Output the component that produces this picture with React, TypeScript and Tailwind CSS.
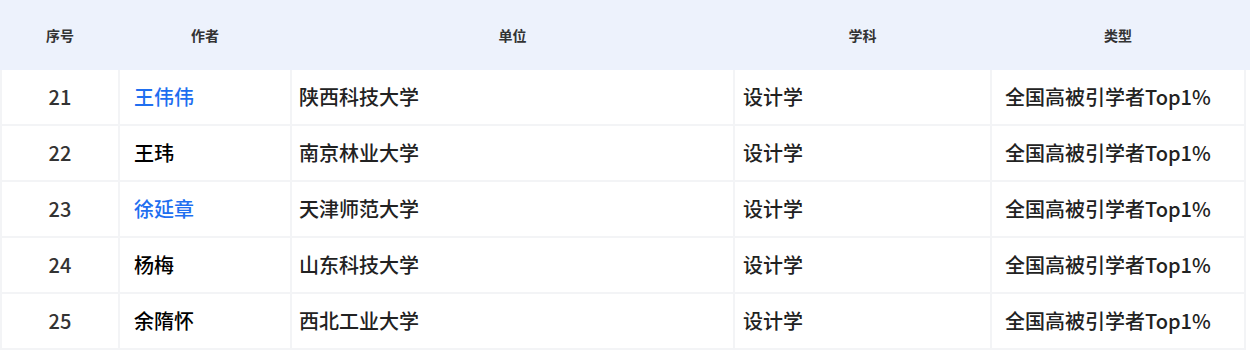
import React from 'react';

type Row = { no: number; author: string; linked: boolean; org: string; subject: string; kind: string };

const rows: Row[] = [
  { no: 21, author: '王伟伟', linked: true, org: '陕西科技大学', subject: '设计学', kind: '全国高被引学者Top1%' },
  { no: 22, author: '王玮', linked: false, org: '南京林业大学', subject: '设计学', kind: '全国高被引学者Top1%' },
  { no: 23, author: '徐延章', linked: true, org: '天津师范大学', subject: '设计学', kind: '全国高被引学者Top1%' },
  { no: 24, author: '杨梅', linked: false, org: '山东科技大学', subject: '设计学', kind: '全国高被引学者Top1%' },
  { no: 25, author: '余隋怀', linked: false, org: '西北工业大学', subject: '设计学', kind: '全国高被引学者Top1%' },
];

const cols = 'grid grid-cols-[116px_170px_441px_255px_252px] gap-x-[2px]';

export default function App() {
  return (
    <div
      className="w-[1250px] h-[351px] bg-white overflow-hidden"
      style={{ fontFamily: '"Noto Sans CJK SC", "Noto Sans", sans-serif' }}
    >
      <div className={`${cols} h-[70px] bg-[#edf2fc] pl-[2px] items-center text-sm font-bold text-[#333]`}>
        <div className="text-center">序号</div>
        <div className="text-center">作者</div>
        <div className="text-center">单位</div>
        <div className="text-center">学科</div>
        <div className="text-center">类型</div>
      </div>
      <div className={`${cols} gap-y-[2px] w-[1246px] bg-[#f3f4f6] px-[2px] pb-[2px] text-xl font-medium text-[#222]`}>
        {rows.map((r) => (
          <React.Fragment key={r.no}>
            <div className="bg-white h-[54px] flex items-center justify-center text-[#333]">{r.no}</div>
            <div className={`bg-white h-[54px] flex items-center pl-[14px] ${r.linked ? 'text-[#1f6ff0]' : 'text-black'}`}>
              {r.author}
            </div>
            <div className="bg-white h-[54px] flex items-center pl-[7px]">{r.org}</div>
            <div className="bg-white h-[54px] flex items-center pl-[8px]">{r.subject}</div>
            <div className="bg-white h-[54px] flex items-center pl-[13px]">{r.kind}</div>
          </React.Fragment>
        ))}
      </div>
    </div>
  );
}
